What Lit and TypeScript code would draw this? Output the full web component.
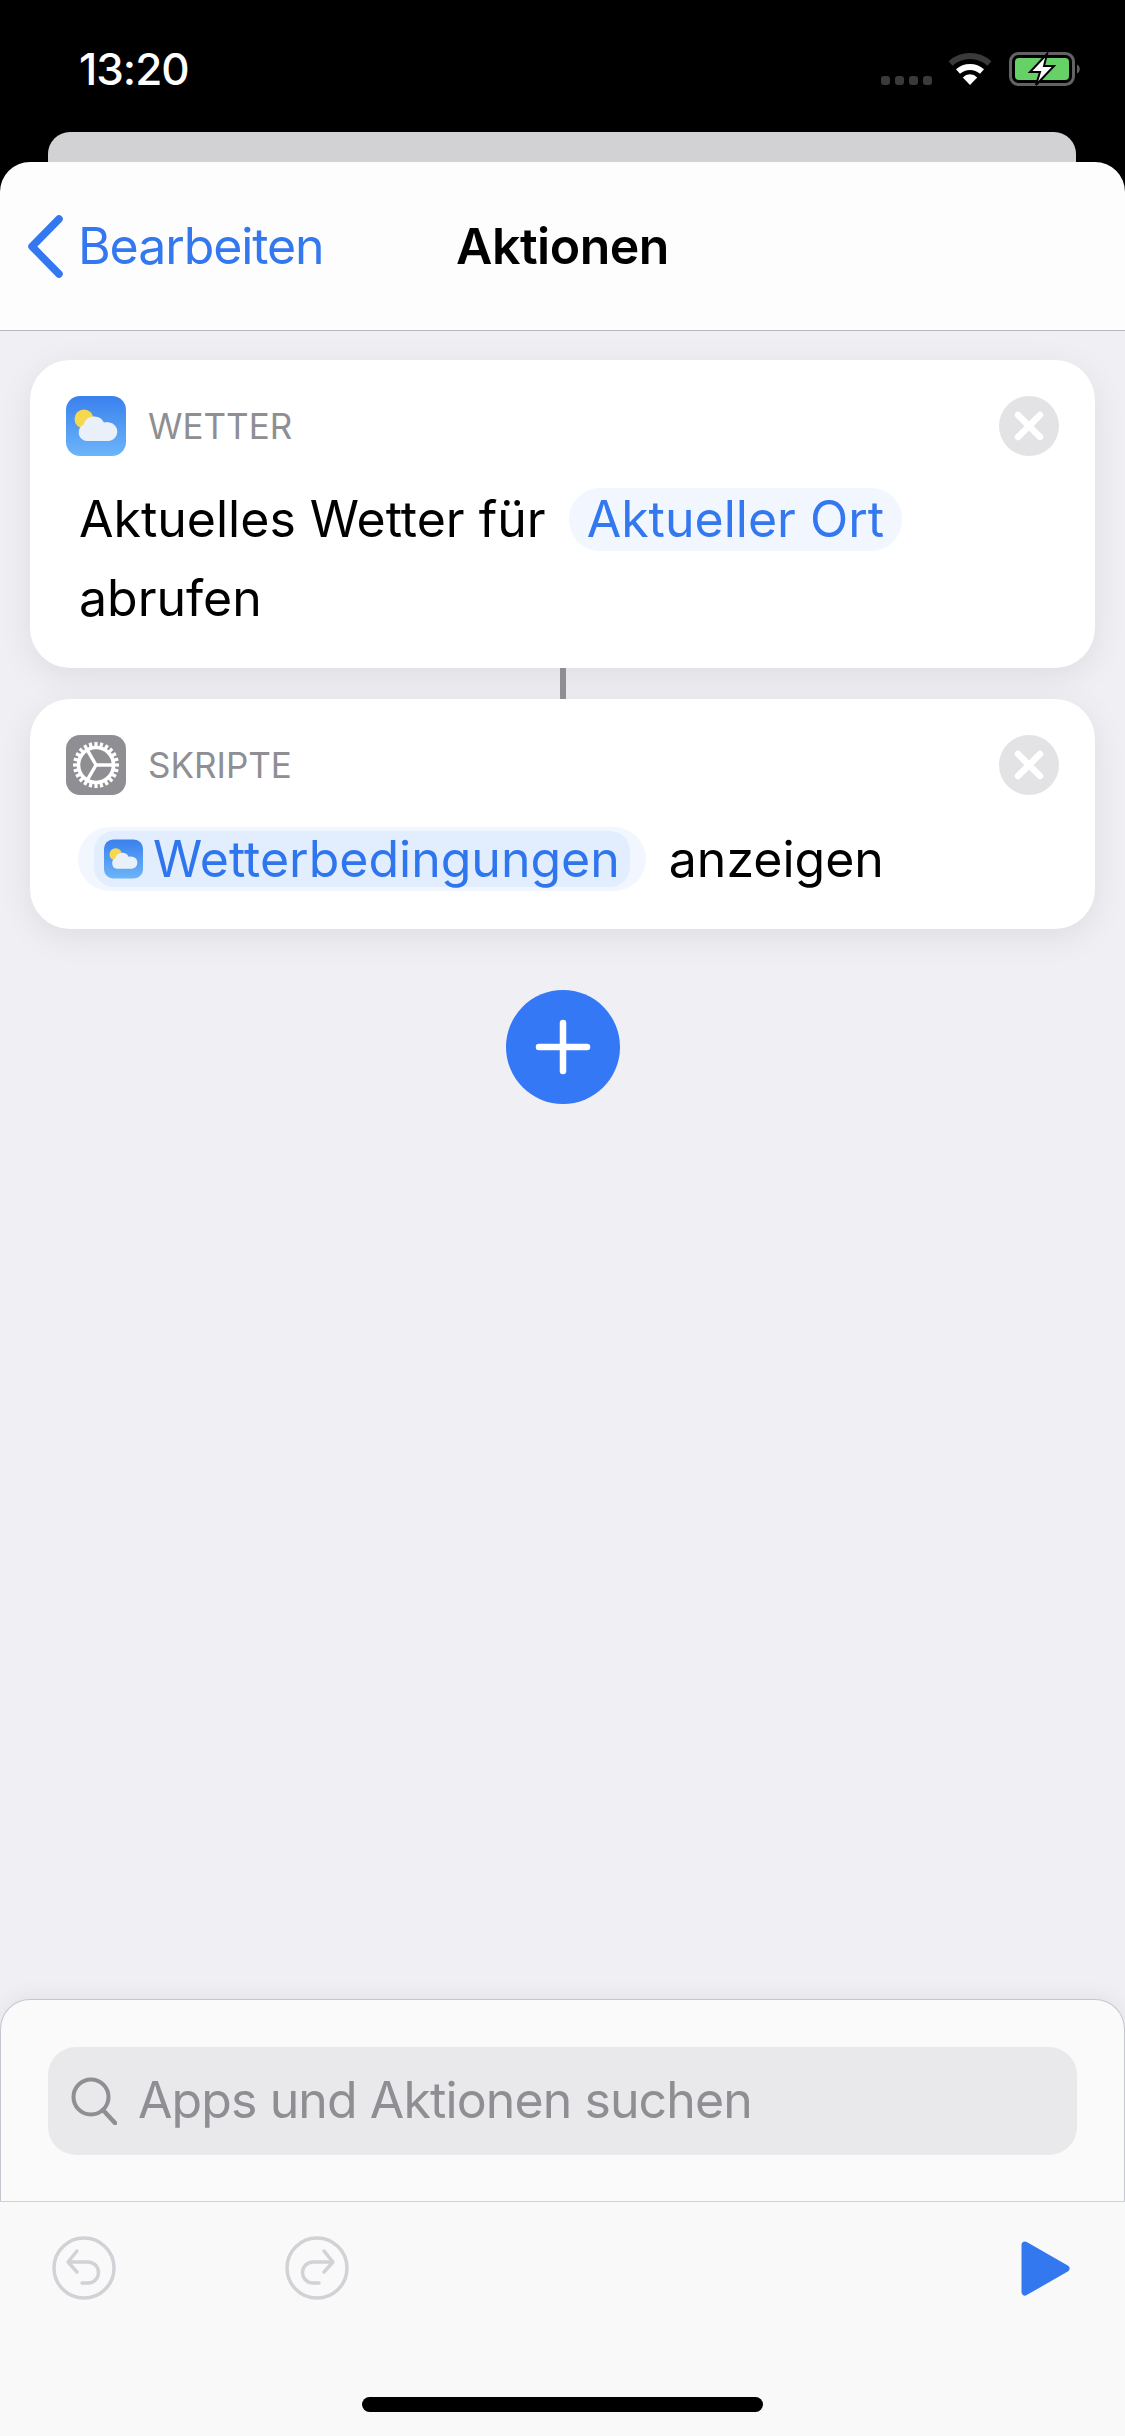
import { html, css, svg, LitElement } from 'lit';
import { customElement } from 'lit/decorators.js';

// Weather app glyph, also used at a smaller size inside the variable chip
const weatherIcon = (cls: string) => html`
  <svg class=${cls} viewBox="0 0 60 60">
    <defs>
      <linearGradient id="sky-${cls}" x1="0" y1="0" x2="0" y2="1">
        <stop offset="0" stop-color="#3a80ee"></stop>
        <stop offset="1" stop-color="#6cb5f9"></stop>
      </linearGradient>
    </defs>
    <rect width="60" height="60" rx="14" fill="url(#sky-${cls})"></rect>
    <circle cx="18" cy="23" r="9.5" fill="#f6d84f"></circle>
    <path
      fill="#e9f0fa"
      d="M21 45a8.5 8.5 0 0 1-3.5-16.2A11 11 0 0 1 38 26.6a9.3 9.3 0 0 1 5.5-.2A9.4 9.4 0 0 1 43 45Z"
    ></path>
  </svg>
`;

// Gear teeth are generated instead of written out by hand
const gearTeeth = Array.from({ length: 24 }, (_, i) => {
  const a = (i * Math.PI) / 12;
  const x1 = (30 + 18 * Math.cos(a)).toFixed(2);
  const y1 = (30 + 18 * Math.sin(a)).toFixed(2);
  const x2 = (30 + 23 * Math.cos(a)).toFixed(2);
  const y2 = (30 + 23 * Math.sin(a)).toFixed(2);
  return svg`<line x1=${x1} y1=${y1} x2=${x2} y2=${y2} stroke-width="3.2"></line>`;
});

const scriptIcon = html`
  <svg class="app-icon" viewBox="0 0 60 60">
    <rect width="60" height="60" rx="14" fill="#8e8e93"></rect>
    <g stroke="#fff" fill="none">
      ${gearTeeth}
      <circle cx="30" cy="30" r="17.5" stroke-width="3.6"></circle>
      <path d="M30 30H47M30 30L21.5 15.3M30 30L21.5 44.7" stroke-width="3.4"></path>
    </g>
  </svg>
`;

const closeButton = html`
  <svg class="close" viewBox="0 0 60 60">
    <circle cx="30" cy="30" r="30" fill="#e3e3e5"></circle>
    <path
      d="M19 19L41 41M41 19L19 41"
      stroke="#fff"
      stroke-width="6.5"
      stroke-linecap="round"
    ></path>
  </svg>
`;

const historyArrow = svg`
  <circle cx="32" cy="32" r="30" fill="none" stroke-width="3.4"></circle>
  <path
    fill="none"
    stroke-width="3.4"
    stroke-linecap="round"
    stroke-linejoin="round"
    d="M25 15L16 26L25 36M16 26H36A10.5 10.5 0 0 1 36 47H30"
  ></path>
`;

@customElement('app-root')
export class AppRoot extends LitElement {
  render() {
    return html`
      <div class="screen">
        <div class="status">
          <span class="time">13:20</span>
          <div class="status-icons">
            <div class="cells">
              <i></i><i></i><i></i><i></i>
            </div>
            <svg class="wifi" viewBox="0 0 44 33">
              <path
                d="M2.6 11.5A29 29 0 0 1 41.4 11.5"
                fill="none"
                stroke="#3a3a3c"
                stroke-width="6"
              ></path>
              <path
                d="M10 19.6A18 18 0 0 1 34 19.6"
                fill="none"
                stroke="#fff"
                stroke-width="6"
              ></path>
              <path d="M22 33L14.8 25.4A10 10 0 0 1 29.2 25.4Z" fill="#fff"></path>
            </svg>
            <svg class="battery" viewBox="0 0 73 34">
              <rect
                x="1.5"
                y="1.5"
                width="63"
                height="31"
                rx="8"
                fill="none"
                stroke="#636366"
                stroke-width="3"
              ></rect>
              <rect x="6" y="6" width="54" height="22" rx="4" fill="#65d166"></rect>
              <path d="M68 12.5a5 5 0 0 1 0 9Z" fill="#636366"></path>
              <path
                d="M38 2L21 20H31L27 33L45 14H35Z"
                fill="#fff"
                stroke="#000"
                stroke-width="2"
              ></path>
            </svg>
          </div>
        </div>

        <div class="back-sheet"></div>

        <nav class="nav">
          <div class="back">
            <svg class="chevron" viewBox="0 0 36 63">
              <path
                d="M32 4L5 31.5L32 59"
                fill="none"
                stroke="#3478f0"
                stroke-width="7.5"
                stroke-linecap="round"
                stroke-linejoin="round"
              ></path>
            </svg>
            <span>Bearbeiten</span>
          </div>
          <span class="title">Aktionen</span>
          <span></span>
        </nav>

        <main class="content">
          <section class="card">
            <header class="card-head">
              ${weatherIcon('app-icon')}
              <span class="category">WETTER</span>
              ${closeButton}
            </header>
            <div class="card-body">
              <span>Aktuelles Wetter für</span>
              <span class="chip">Aktueller Ort</span>
              <span class="full">abrufen</span>
            </div>
          </section>

          <div class="connector"></div>

          <section class="card">
            <header class="card-head">
              ${scriptIcon}
              <span class="category">SKRIPTE</span>
              ${closeButton}
            </header>
            <div class="card-body">
              <span class="var-chip">
                <span class="var-inner">
                  ${weatherIcon('mini-icon')}
                  <span>Wetterbedingungen</span>
                </span>
              </span>
              <span>anzeigen</span>
            </div>
          </section>

          <svg class="add" viewBox="0 0 114 114">
            <circle cx="57" cy="57" r="57" fill="#3478f5"></circle>
            <path
              d="M33 57H81M57 33V81"
              stroke="#fff"
              stroke-width="6.5"
              stroke-linecap="round"
            ></path>
          </svg>

          <div class="panel">
            <div class="search">
              <svg class="search-icon" viewBox="0 0 46 48">
                <circle
                  cx="20"
                  cy="20"
                  r="17.5"
                  fill="none"
                  stroke="#8e8e93"
                  stroke-width="4"
                ></circle>
                <path
                  d="M32 33L44 46"
                  stroke="#8e8e93"
                  stroke-width="4.5"
                  stroke-linecap="round"
                ></path>
              </svg>
              <span class="search-label">Apps und Aktionen suchen</span>
            </div>
          </div>
        </main>

        <footer class="toolbar">
          <div class="tools">
            <svg class="history" viewBox="0 0 64 64">${historyArrow}</svg>
            <svg class="history redo" viewBox="0 0 64 64">${historyArrow}</svg>
            <svg class="play" viewBox="0 0 49 55">
              <path
                d="M4 4L45 27.5L4 51Z"
                fill="#3478f0"
                stroke="#3478f0"
                stroke-width="7"
                stroke-linejoin="round"
              ></path>
            </svg>
          </div>
          <div class="home-bar"></div>
        </footer>
      </div>
    `;
  }

  static styles = css`
    :host {
      display: block;
      width: 1125px;
      height: 2436px;
      font-family: Inter, 'Liberation Sans', sans-serif;
    }

    svg {
      display: block;
      flex: none;
    }

    .screen {
      display: flex;
      flex-direction: column;
      height: 2436px;
      overflow: hidden;
      background: #000;
    }

    /* status bar */

    .status {
      display: flex;
      justify-content: space-between;
      height: 132px;
      box-sizing: border-box;
      padding: 45px 43px 0 79px;
    }

    .time {
      color: #fff;
      font-size: 44px;
      line-height: 48px;
      font-weight: 500;
      letter-spacing: -1px;
    }

    .status-icons {
      display: flex;
      align-items: flex-start;
      padding-top: 7px;
    }

    .cells {
      display: flex;
      gap: 5px;
      margin: 24px 16px 0 0;
    }

    .cells i {
      width: 9px;
      height: 9px;
      border-radius: 3px;
      background: #3a3a3c;
    }

    .wifi {
      width: 44px;
      height: 33px;
      margin-right: 17px;
    }

    .battery {
      width: 73px;
      height: 34px;
    }

    .back-sheet {
      flex: none;
      height: 30px;
      margin: 0 49px 0 48px;
      border-radius: 22px 22px 0 0;
      background: #d2d2d4;
    }

    /* navigation */

    .nav {
      flex: none;
      display: grid;
      grid-template-columns: 1fr auto 1fr;
      align-items: center;
      height: 168px;
      padding: 0 27px;
      background: #fdfdfd;
      border-bottom: 1px solid #b9b9bc;
      border-radius: 30px 30px 0 0;
      font-size: 50px;
      line-height: 60px;
    }

    .back {
      display: flex;
      align-items: center;
      gap: 15px;
      color: #3478f0;
      letter-spacing: -1.1px;
    }

    .chevron {
      width: 36px;
      height: 63px;
    }

    .title {
      color: #000;
      font-weight: 600;
      letter-spacing: -0.5px;
    }

    /* action list */

    .content {
      flex: 1;
      display: flex;
      flex-direction: column;
      padding: 29px 30px 0;
      background: #efeff4;
      min-height: 0;
    }

    .card {
      position: relative;
      flex: none;
      box-sizing: border-box;
      padding: 36px 36px 38px;
      background: #fff;
      border-radius: 40px;
      box-shadow: 0 8px 34px rgba(0, 0, 0, 0.08);
    }

    .card-head {
      display: flex;
      align-items: center;
      height: 60px;
    }

    .app-icon {
      width: 60px;
      height: 60px;
    }

    .mini-icon {
      width: 39px;
      height: 40px;
    }

    .category {
      flex: 1;
      margin-left: 22px;
      color: #8e8e93;
      font-size: 35px;
    }

    .close {
      width: 60px;
      height: 60px;
    }

    .card-body {
      display: flex;
      flex-wrap: wrap;
      align-items: center;
      gap: 16px 23px;
      margin: 32px 0 0 13px;
      color: #000;
      font-size: 50px;
      line-height: 63px;
    }

    .full {
      flex-basis: 100%;
    }

    .chip {
      padding: 0 18px;
      border-radius: 31px;
      background: #f2f7ff;
      color: #3478f0;
    }

    .var-chip {
      margin-left: -1px;
      padding: 4px 16px;
      border-radius: 32px;
      background: #f2f7ff;
      color: #2f76ee;
    }

    .var-inner {
      display: flex;
      align-items: center;
      gap: 10px;
      height: 56px;
      padding: 0 10px;
      border-radius: 20px;
      background: #e2eefe;
    }

    .connector {
      flex: none;
      align-self: center;
      width: 6px;
      height: 31px;
      background: #8e8e93;
      position: relative;
      z-index: 1;
    }

    .add {
      width: 114px;
      height: 114px;
      align-self: center;
      margin-top: 61px;
    }

    /* search panel */

    .panel {
      flex: none;
      box-sizing: border-box;
      height: 202px;
      margin: auto -30px 0;
      padding-top: 47px;
      background: #fafafb;
      border: 1px solid #c6c6d0;
      border-bottom: 0;
      border-radius: 30px 30px 0 0;
      box-shadow: 0 -4px 20px rgba(0, 0, 0, 0.05);
    }

    .search {
      display: flex;
      align-items: center;
      gap: 21px;
      height: 108px;
      box-sizing: border-box;
      padding-left: 23px;
      margin: 0 47px;
      border-radius: 28px;
      background: #e9e9eb;
      color: #8e8e93;
      font-size: 50px;
      letter-spacing: -0.9px;
    }

    .search-label {
      padding-bottom: 2px;
    }

    .search-icon {
      width: 46px;
      height: 48px;
    }

    /* bottom toolbar */

    .toolbar {
      flex: none;
      position: relative;
      display: flex;
      flex-direction: column;
      align-items: center;
      height: 235px;
      box-sizing: border-box;
      background: #f9f9fa;
      border-top: 1px solid #d2d2d6;
    }

    .tools {
      display: flex;
      align-items: center;
      align-self: stretch;
      gap: 169px;
      padding: 34px 55px 0 52px;
    }

    .history {
      width: 64px;
      height: 64px;
      stroke: #d1d1d6;
    }

    .redo {
      transform: scaleX(-1);
    }

    .play {
      width: 49px;
      height: 55px;
      margin-left: auto;
    }

    .home-bar {
      width: 401px;
      height: 15px;
      margin-top: 97px;
      border-radius: 8px;
      background: #000;
    }
  `;
}
